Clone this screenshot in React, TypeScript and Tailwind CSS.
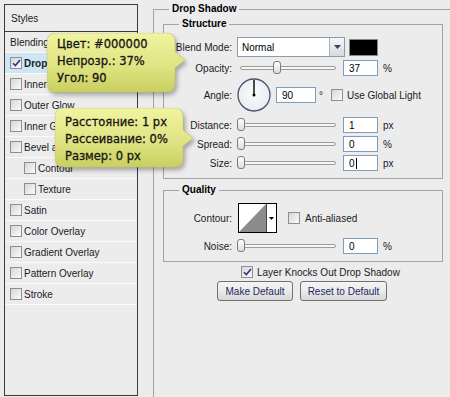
import React from 'react';

type StyleRow = { label: string; box?: boolean; on?: boolean; active?: boolean; indent?: boolean };

const styleRows: StyleRow[] = [
  { label: 'Blending Options: Default', box: false },
  { label: 'Drop Shadow', on: true, active: true },
  { label: 'Inner Shadow' },
  { label: 'Outer Glow' },
  { label: 'Inner Glow' },
  { label: 'Bevel and Emboss' },
  { label: 'Contour', indent: true },
  { label: 'Texture', indent: true },
  { label: 'Satin' },
  { label: 'Color Overlay' },
  { label: 'Gradient Overlay' },
  { label: 'Pattern Overlay' },
  { label: 'Stroke' },
];

const Box = ({ on = false }: { on?: boolean }) => (
  <span className="flex h-[12px] w-[12px] shrink-0 items-center justify-center border border-[#8e8f8f] bg-linear-to-br from-[#d6d6d6] to-[#fbfbfb]">
    {on && (
      <svg width="9" height="8" viewBox="0 0 9 8">
        <path d="M1 4.2 L3.4 6.6 L8 1" fill="none" stroke="#26348c" strokeWidth="1.6" />
      </svg>
    )}
  </span>
);

const Slider = ({ pos }: { pos: number }) => (
  <div className="relative h-[14px] w-[99px]">
    <div className="absolute left-[3px] right-0 top-[5px] h-[4px] rounded-full border border-[#9c9c9c] bg-[#f6f6f6]" />
    <div
      className="absolute top-0 h-[13px] w-[8px] rounded-[3px] border border-[#7c7c7c] bg-linear-to-b from-white to-[#dcdcdc]"
      style={{ left: pos }}
    />
  </div>
);

const Field = ({ value, caret = false }: { value: string; caret?: boolean }) => (
  <div className="flex h-[16px] w-[35px] items-center border border-[#7f9db9] bg-white pl-[5px] text-black">
    {value}
    {caret && <span className="ml-[1px] h-[11px] w-[1px] bg-black" />}
  </div>
);

const Row = ({ label, className, children }: { label: string; className?: string; children: React.ReactNode }) => (
  <div className={'flex items-center ' + (className ?? '')}>
    <span className="w-[68px] text-right">{label}</span>
    <div className="ml-[5px] flex items-center">{children}</div>
  </div>
);

const SliderRow = ({ label, pos, value, unit, caret, className }: { label: string; pos: number; value: string; unit: string; caret?: boolean; className?: string }) => (
  <Row label={label} className={className}>
    <Slider pos={pos} />
    <span className="ml-[7px]">
      <Field value={value} caret={caret} />
    </span>
    <span className="ml-[5px]">{unit}</span>
  </Row>
);

// yellow callout drawn as svg, text laid over it
const Bubble = ({ className, w, h, tipY, pad, lines }: { className: string; w: number; h: number; tipY: number; pad: string; lines: string[] }) => (
  <div className={'absolute ' + className}>
    <svg width={w + 14} height={h + 6} className="drop-shadow-[2px_3px_2px_rgba(0,0,0,0.3)]">
      <defs>
        <linearGradient id={'bg' + w + h + tipY} x1="0" y1="0" x2="0" y2="1">
          <stop offset="0" stopColor="#f1f4a0" />
          <stop offset="0.55" stopColor="#e0e483" />
          <stop offset="1" stopColor="#c9cf60" />
        </linearGradient>
      </defs>
      <path
        d={`M9 0 H${w - 9} Q${w} 0 ${w} 9 V${tipY - 8} L${w + 10} ${tipY} L${w} ${tipY + 8} V${h - 9} Q${w} ${h} ${w - 9} ${h} H9 Q0 ${h} 0 ${h - 9} V9 Q0 0 9 0 Z`}
        fill={`url(#bg${w}${h}${tipY})`}
        stroke="#c2c767"
        strokeWidth="0.6"
      />
    </svg>
    <div className={"absolute left-[10px] top-0 font-['DejaVu_Sans',Verdana,sans-serif] text-[11.5px] leading-[17px] text-[#151515] [-webkit-text-stroke:0.3px_#151515] " + pad}>
      {lines.map((l) => (
        <div key={l}>{l}</div>
      ))}
    </div>
  </div>
);

export default function App() {
  return (
    <div className="relative flex h-[397px] w-[450px] overflow-hidden bg-[#ececec] font-['Liberation_Sans',Arial,sans-serif] text-[10px] text-[#1a1a26]">
      {/* styles list */}
      <div className="ml-[4px] mt-[4px] flex w-[134px] shrink-0 flex-col">
        <div className="flex h-[28px] items-center border border-[#3a3a3a] pl-[6px]">Styles</div>
        <div className="h-[364px] border-x border-b border-[#3a3a3a]">
          {styleRows.map((r) => (
            <div
              key={r.label}
              className={
                'flex h-[21px] items-center gap-[2px] whitespace-nowrap border-b border-[#fafafa] ' +
                (r.indent ? 'pl-[19px] ' : 'pl-[5px] ') +
                (r.active ? 'bg-[#cde5f5] font-bold' : '')
              }
            >
              {r.box !== false && <Box on={r.on} />}
              <span>{r.label}</span>
            </div>
          ))}
        </div>
      </div>

      {/* drop shadow settings */}
      <div className="ml-[15px] shrink-0">
        <fieldset className="mt-[2px] min-h-[420px] w-[320px] border border-[#a3a3a3]">
          <legend className="ml-[15px] px-[3px] font-bold leading-[14px] text-black">Drop Shadow</legend>

          <fieldset className="ml-[9px] mt-[1px] w-[280px] border border-[#a3a3a3] pb-[7px]">
            <legend className="ml-[15px] px-[3px] font-bold leading-[14px] text-black">Structure</legend>

            <Row label="Blend Mode:" className="mt-[6px]">
              <div className="flex h-[20px] w-[108px] items-center border border-[#8e99aa] bg-white">
                <span className="flex-1 pl-[4px] text-black">Normal</span>
                <span className="flex h-full w-[15px] items-center justify-center border-l border-[#a9b2c0] bg-linear-to-b from-[#f5f7f9] to-[#d5dae1]">
                  <svg width="7" height="4" viewBox="0 0 7 4">
                    <path d="M0 0 H7 L3.5 4 Z" fill="#3a4258" />
                  </svg>
                </span>
              </div>
              <span className="ml-[4px] h-[17px] w-[29px] border border-[#8a8a8a] bg-black" />
            </Row>

            <SliderRow label="Opacity:" pos={36} value="37" unit="%" className="mt-[3px]" />

            <Row label="Angle:" className="mt-[2px]">
              <svg width="34" height="34" viewBox="0 0 34 34">
                <defs>
                  <radialGradient id="dial" cx="50%" cy="45%" r="60%">
                    <stop offset="0" stopColor="#fbfbfc" />
                    <stop offset="0.8" stopColor="#eceef2" />
                    <stop offset="1" stopColor="#cfd3dc" />
                  </radialGradient>
                </defs>
                <circle cx="17" cy="17" r="16" fill="url(#dial)" stroke="#46526e" strokeWidth="1.3" />
                <line x1="17" y1="17" x2="17" y2="2" stroke="#000" strokeWidth="1.4" />
                <circle cx="17" cy="17" r="1.5" fill="#000" />
              </svg>
              <div className="ml-[5px] flex h-[16px] w-[40px] items-center border border-[#7f9db9] bg-white pl-[5px] text-black">90</div>
              <span className="ml-[3px] self-start pt-[10px]">°</span>
              <span className="ml-[8px]">
                <Box />
              </span>
              <span className="ml-[4px] whitespace-nowrap">Use Global Light</span>
            </Row>

            <SliderRow label="Distance:" pos={0} value="1" unit="px" className="mt-[5px]" />
            <SliderRow label="Spread:" pos={0} value="0" unit="%" className="mt-[3px]" />
            <SliderRow label="Size:" pos={0} value="0" unit="px" caret className="mt-[3px]" />
          </fieldset>

          <fieldset className="ml-[9px] mt-[4px] w-[280px] border border-[#a3a3a3] pb-[7px]">
            <legend className="ml-[15px] px-[3px] font-bold leading-[14px] text-black">Quality</legend>

            <Row label="Contour:" className="mt-[6px]">
              <div className="ml-[1px] flex h-[30px] w-[39px] border border-black bg-white">
                <svg width="27" height="28" viewBox="0 0 27 28">
                  <polygon points="0,28 27,0 27,28" fill="#8c8c8c" />
                </svg>
                <span className="flex w-[10px] items-center justify-center border-l border-[#444]">
                  <svg width="5" height="3" viewBox="0 0 5 3">
                    <path d="M0 0 H5 L2.5 3 Z" fill="#000" />
                  </svg>
                </span>
              </div>
              <span className="ml-[11px]">
                <Box />
              </span>
              <span className="ml-[5px]">Anti-aliased</span>
            </Row>

            <SliderRow label="Noise:" pos={0} value="0" unit="%" className="mt-[5px]" />
          </fieldset>

          <div className="ml-[87px] mt-[4px] flex h-[12px] items-center">
            <Box on />
            <span className="ml-[4px] whitespace-nowrap">Layer Knocks Out Drop Shadow</span>
          </div>

          <div className="ml-[63px] mt-[3px] flex gap-[7px]">
            <button className="h-[20px] w-[76px] rounded-[3px] border border-[#707070] bg-linear-to-b from-[#f4f4f4] via-[#ebebeb] to-[#d6d6d6] text-[#1c2766]">
              Make Default
            </button>
            <button className="h-[20px] w-[87px] rounded-[3px] border border-[#707070] bg-linear-to-b from-[#f4f4f4] via-[#ebebeb] to-[#d6d6d6] text-[#1c2766]">
              Reset to Default
            </button>
          </div>
        </fieldset>
      </div>

      <Bubble
        className="left-[47px] top-[33px]"
        w={128}
        h={59}
        tipY={27}
        pad="pt-[3px]"
        lines={['Цвет: #000000', 'Непрозр.: 37%', 'Угол: 90']}
      />
      <Bubble
        className="left-[55px] top-[108px]"
        w={128}
        h={59}
        tipY={30}
        pad="pt-[6px]"
        lines={['Расстояние: 1 px', 'Рассеивание: 0%', 'Размер: 0 px']}
      />
    </div>
  );
}
